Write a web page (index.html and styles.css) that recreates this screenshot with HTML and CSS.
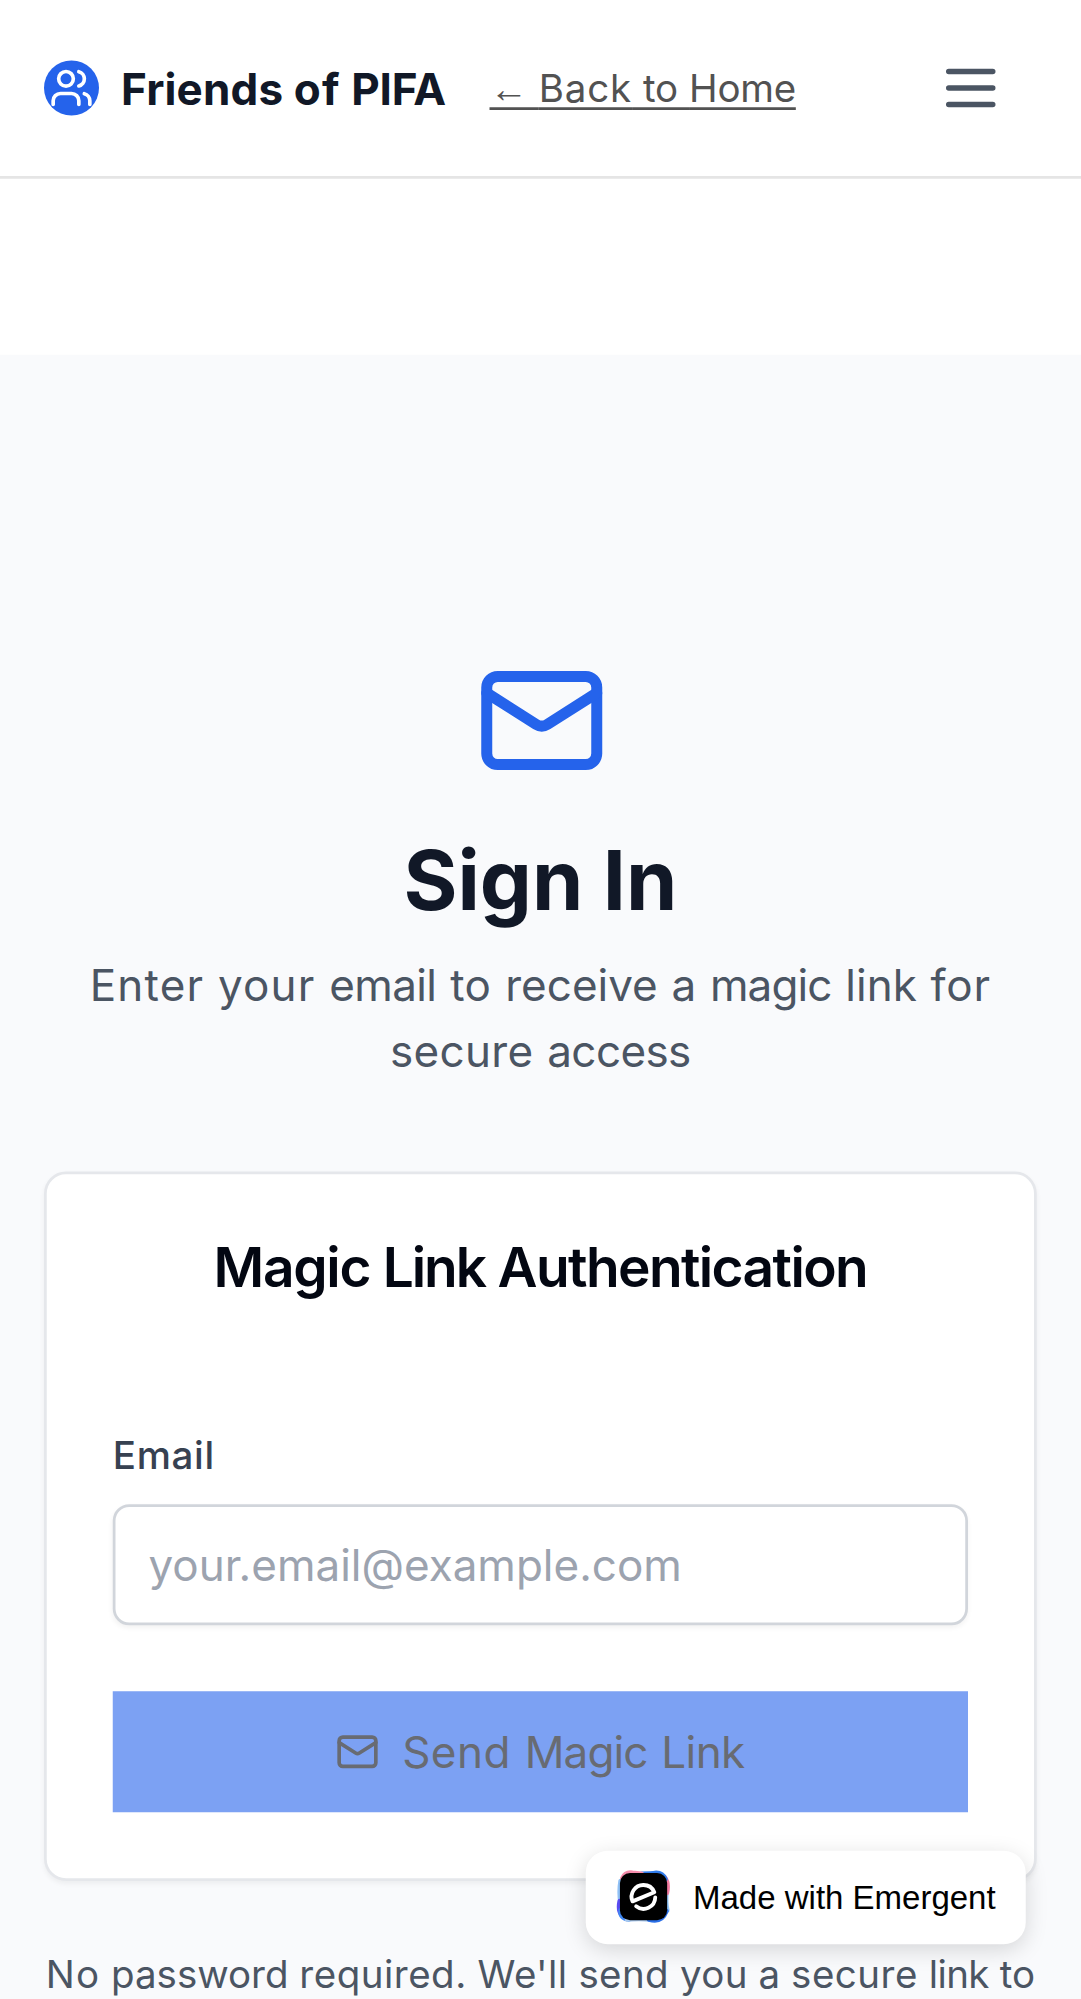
FILE: index.html
```html
<!DOCTYPE html>
<html lang="en">
<head>
<meta charset="utf-8">
<title>Friends of PIFA - Sign In</title>
<link rel="stylesheet" href="styles.css">
</head>
<body>
<div class="app">
  <header class="header">
    <div class="brand">
      <span class="brand-mark">
        <svg class="icon-16" viewBox="0 0 24 24"><path d="M16 21v-2a4 4 0 0 0-4-4H6a4 4 0 0 0-4 4v2"/><circle cx="9" cy="7" r="4"/><path d="M22 21v-2a4 4 0 0 0-3-3.87"/><path d="M16 3.13a4 4 0 0 1 0 7.75"/></svg>
      </span>
      <span class="brand-name">Friends <span class="wide-4">of</span> <span class="tight-1">PIFA</span></span>
    </div>
    <a class="back-link" href="#"><span class="arrow">←</span> <span class="wide-3">Back</span> to <span class="tight-1">Home</span></a>
    <button class="menu-button" aria-label="Menu">
      <svg class="icon-24" viewBox="0 0 24 24"><path d="M4 6h16M4 12h16M4 18h16"/></svg>
    </button>
  </header>
  <main class="main">
    <div class="intro">
      <svg class="icon-48" viewBox="0 0 24 24"><rect x="2" y="4" width="20" height="16" rx="2"/><path d="m22 7-8.97 5.7a1.94 1.94 0 0 1-2.06 0L2 7"/></svg>
      <h1 class="title">Sign In</h1>
      <p class="subtitle"><span class="wide-4">Enter</span> <span class="wide-4">your</span> <span class="tight-2">email</span> <span class="wide-2">to</span> receive a <span class="tight-3">magic</span> link <span class="wide-3">for</span><br><span class="wide-1">secure</span> <span class="tight-2">access</span></p>
    </div>
    <section class="card">
      <h2 class="card-title">Magic <span class="card-title-mid">Link</span> <span class="card-title-end">Authentication</span></h2>
      <form class="form">
        <label class="label" for="email">Email</label>
        <input class="input" id="email" type="email" placeholder="your.email@example.com">
        <button class="submit" type="button" disabled>
          <svg class="icon-16" viewBox="0 0 24 24"><rect x="2" y="4" width="20" height="16" rx="2"/><path d="m22 7-8.97 5.7a1.94 1.94 0 0 1-2.06 0L2 7"/></svg>
          <span class="submit-text"><span class="wide-2">Send</span> <span class="tight-3">Magic</span> <span class="tight-2">Link</span></span>
        </button>
      </form>
    </section>
    <p class="note"><span class="wide-4">No</span> password <span class="wide-2">required.</span> <span class="wide-1">We'll send you</span> a <span class="wide-2">secure</span> <span class="tight-2">link</span> to</p>
  </main>
  <a class="badge" href="#">
    <svg class="badge-logo" viewBox="0 0 60 60">
      <g class="badge-glow">
        <path stroke="#8fc0f5" d="M5 12Q3 24 5 36"/>
        <path stroke="#5a4cf2" d="M4 34Q2 44 6 49"/>
        <path stroke="#3f86f0" d="M5 44Q4 53 14 54"/>
        <path stroke="#a9c9ee" d="M12 54Q26 53 36 54"/>
        <path stroke="#8fc4f8" d="M55 24Q54 36 56 44"/>
        <path stroke="#2a6fe8" d="M36 54Q50 58 55 45"/>
        <path stroke="#f27ba0" d="M53 8Q58 14 55.500 25"/>
        <path stroke="#2f7bea" d="M28 4Q38 4 44 3Q51 3 54 10"/>
        <path stroke="#f58cab" d="M7 9Q10 2 18 3L28 4"/>
      </g>
      <rect x="4.300" y="3.300" width="51.500" height="51.500" rx="11" fill="#000"/>
      <g fill="none" stroke="#fff" stroke-width="4.200">
        <path d="M18 34.200A12.800 12.800 0 0 1 30 16.400A12.800 12.800 0 0 1 41.800 24.300Z"/>
        <path d="M42.800 30A12.800 12.800 0 0 1 22 39.600"/>
      </g>
    </svg>
    <span>Made with Emergent</span>
  </a>
</div>
</body>
</html>
```
FILE: styles.css
```css
* {
  box-sizing: border-box;
  margin: 0;
  padding: 0;
}

html,
body {
  height: 100%;
  overflow: hidden;
  background: #fff;
}

/* Mobile canvas, 393 x 727 units, enlarged to fill the window */
.app {
  position: relative;
  width: 393.5px;
  height: 727px;
  overflow: hidden;
  transform: scale(2.75);
  transform-origin: 0 0;
  font: 400 16px/24px Inter, sans-serif;
  color: #111827;
}

svg {
  display: block;
  flex: none;
  fill: none;
  stroke: currentColor;
  stroke-width: 2;
  stroke-linecap: round;
  stroke-linejoin: round;
}

.icon-16 { width: 16px; height: 16px; }
.icon-24 { width: 24px; height: 24px; }
.icon-48 { width: 48px; height: 48px; }

/* Word-level tracking */
.wide-1 { letter-spacing: 0.12px; }
.wide-2 { letter-spacing: 0.18px; }
.wide-3 { letter-spacing: 0.3px; }
.wide-4 { letter-spacing: 0.42px; }
.tight-1 { letter-spacing: -0.1px; }
.tight-2 { letter-spacing: -0.22px; }
.tight-3 { letter-spacing: -0.32px; }

.header {
  display: flex;
  align-items: center;
  height: 65px;
  padding: 0 16.5px 0 16px;
  border-bottom: 1px solid #e5e5e5;
}

.brand {
  display: flex;
  align-items: center;
  gap: 8px;
}

.brand-mark {
  display: flex;
  align-items: center;
  justify-content: center;
  width: 20px;
  height: 20px;
  border-radius: 50%;
  background: #2563eb;
  color: #fff;
}

.brand-name {
  width: 118px;
  font-weight: 700;
  letter-spacing: 0.06px;
  white-space: nowrap;
}

.back-link {
  margin-left: 16px;
  font-size: 14px;
  line-height: 20px;
  color: #525252;
  white-space: nowrap;
  text-decoration-thickness: 1.1px;
  text-underline-offset: 2px;
}

.arrow {
  font-family: "Liberation Sans", sans-serif;
}

.menu-button {
  margin-left: auto;
  padding: 12px;
  border: 0;
  background: none;
  color: #4b5563;
}

.main {
  height: 598px;
  margin-top: 64px;
  padding: 109px 16.5px 0 16px;
  background: #f9fafc;
}

.intro {
  display: flex;
  flex-direction: column;
  align-items: center;
  color: #2563eb;
  text-align: center;
}

.title {
  margin: 16px 0 8px;
  font-size: 30px;
  line-height: 36px;
  font-weight: 700;
  color: #111827;
}

.subtitle {
  color: #4b5563;
  word-spacing: 0.5px;
  white-space: nowrap;
}

.card {
  height: 258px;
  margin-top: 32px;
  padding: 24px;
  border: 1px solid #e5e7eb;
  border-radius: 8px;
  background: #fff;
  box-shadow: 0 1px 2px rgba(0, 0, 0, 0.05);
}

.card-title {
  font-size: 20px;
  line-height: 20px;
  font-weight: 600;
  letter-spacing: -0.48px;
  text-align: center;
  color: #030712;
}

.card-title-mid { letter-spacing: -0.75px; }
.card-title-end { letter-spacing: -0.58px; }

.form {
  display: flex;
  flex-direction: column;
  margin-top: 48px;
}

.label {
  font-size: 14px;
  line-height: 20px;
  font-weight: 500;
  letter-spacing: 0.25px;
  color: #374151;
}

.input {
  width: 100%;
  height: 44px;
  margin: 8px 0 24px;
  padding: 0 12px;
  border: 1px solid #d1d5db;
  border-radius: 6px;
  background: #fff;
  box-shadow: 0 1px 2px rgba(0, 0, 0, 0.05);
  font: inherit;
}

.input::placeholder {
  color: #9ca3af;
}

.submit {
  display: flex;
  align-items: center;
  justify-content: center;
  gap: 8px;
  height: 44px;
  border: 0;
  background: #7ca1f3;
  color: #686b72;
  font: inherit;
}

.submit-text {
  word-spacing: 0.5px;
}

.note {
  margin-top: 24px;
  font-size: 14px;
  line-height: 20px;
  text-align: center;
  white-space: nowrap;
  color: #4b5563;
}

/* Floating badge over the page */
.badge {
  position: absolute;
  right: 20.5px;
  bottom: 20px;
  display: flex;
  align-items: center;
  gap: 8px;
  width: 160px;
  height: 34px;
  padding: 0 11px;
  border-radius: 8px;
  background: #fff;
  box-shadow: 0 2px 8px rgba(0, 0, 0, 0.15);
  font: 12px/14px "Liberation Sans", sans-serif;
  color: #000;
  text-decoration: none;
  white-space: nowrap;
}

.badge-logo {
  width: 20px;
  height: 20px;
  stroke: none;
}

.badge-glow {
  stroke-width: 5;
}
```
